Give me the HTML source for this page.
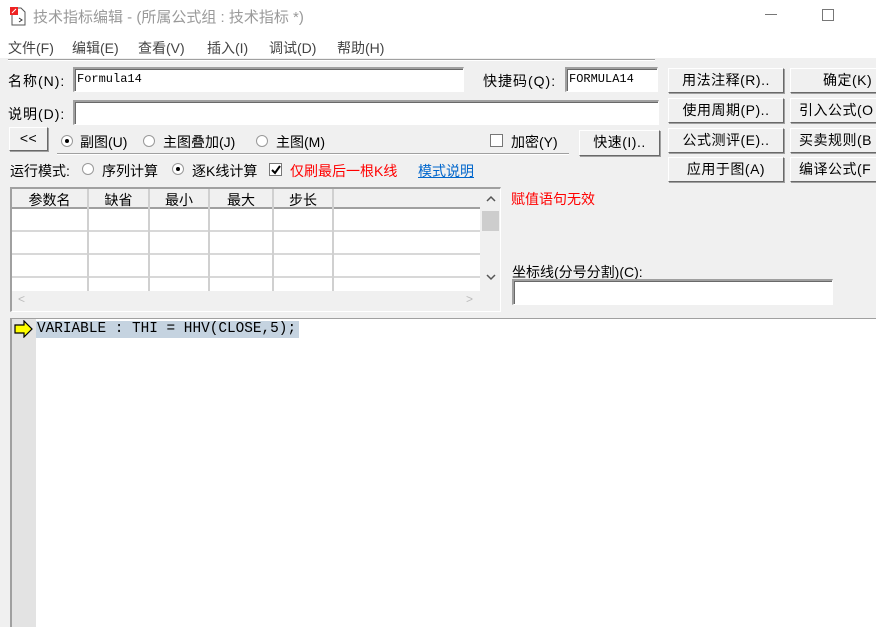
<!DOCTYPE html>
<html><head><meta charset="utf-8"><style>
*{margin:0;padding:0;box-sizing:border-box}
body{width:876px;height:627px;overflow:hidden;background:#f0f0f0;font-family:"Liberation Sans","Noto Sans CJK SC",sans-serif;font-size:14px;color:#000;position:relative}
.a{position:absolute;white-space:nowrap}
.top{left:0;top:0;width:876px;height:58px;background:#fff}
.inp{position:absolute;background:#fff;border-top:2px solid #a0a0a0;border-left:2px solid #a0a0a0;border-right:1px solid #fff;border-bottom:1px solid #fff;box-shadow:inset 1px 1px 0 #696969}
.btn{position:absolute;background:#f0f0f0;border-top:1px solid #fff;border-left:1px solid #fff;border-right:1px solid #696969;border-bottom:1px solid #696969;box-shadow:1px 1px 0 #a0a0a0;text-align:center;font-size:14px;line-height:23px;letter-spacing:0.5px}
.mono{font-family:"Liberation Mono","Noto Sans CJK SC",monospace;font-size:12px}
.rad{position:absolute;width:12px;height:12px;border-radius:50%;background:#fff;border:1px solid #999}
.rad.on::after{content:"";position:absolute;left:3px;top:3px;width:4px;height:4px;border-radius:50%;background:#000}
.chk{position:absolute;width:13px;height:13px;background:#fff;border:1px solid #777}
.m{position:absolute;top:38px;font-size:14px;color:#444}
</style></head><body>
<div class="a top"></div>
<svg class="a" style="left:9px;top:6px" width="18" height="20" viewBox="0 0 18 20"><path d="M3 2h9l4 4v13H3z" fill="#fff" stroke="#555"/><rect x="1" y="1" width="8" height="8" fill="#e22"/><path d="M3 7l4-4" stroke="#fff"/><path d="M10 12l3 2-3 2" fill="none" stroke="#333"/></svg>
<div class="a" style="left:33px;top:6px;font-size:15px;color:#999">技术指标编辑 - (所属公式组 : 技术指标 *)</div>
<div class="a" style="left:765px;top:14px;width:12px;height:1px;background:#777"></div>
<div class="a" style="left:822px;top:9px;width:12px;height:12px;border:1px solid #777"></div>
<div class="m" style="left:8px">文件(F)</div>
<div class="m" style="left:72px">编辑(E)</div>
<div class="m" style="left:138px">查看(V)</div>
<div class="m" style="left:207px">插入(I)</div>
<div class="m" style="left:269px">调试(D)</div>
<div class="m" style="left:337px">帮助(H)</div>
<div class="a" style="left:8px;top:59px;width:647px;height:2px;border-top:1px solid #a0a0a0;border-bottom:1px solid #fff"></div>

<div class="a" style="left:8px;top:71px;letter-spacing:1px">名称(N):</div>
<div class="inp" style="left:73px;top:67px;width:391px;height:25px"><span class="a mono" style="left:2px;top:3px">Formula14</span></div>
<div class="a" style="left:483px;top:71px;letter-spacing:1px">快捷码(Q):</div>
<div class="inp" style="left:565px;top:67px;width:93px;height:25px"><span class="a mono" style="left:2px;top:3px">FORMULA14</span></div>
<div class="a" style="left:8px;top:104px;letter-spacing:1px">说明(D):</div>
<div class="inp" style="left:73px;top:100px;width:586px;height:25px"></div>

<div class="btn" style="left:668px;top:68px;width:116px;height:25px">用法注释(R)..</div>
<div class="btn" style="left:668px;top:98px;width:116px;height:25px">使用周期(P)..</div>
<div class="btn" style="left:668px;top:128px;width:116px;height:25px">公式测评(E)..</div>
<div class="btn" style="left:668px;top:157px;width:116px;height:25px">应用于图(A)</div>
<div class="btn" style="left:790px;top:68px;width:90px;height:25px;text-align:left;padding-left:32px">确定(K)</div>
<div class="btn" style="left:790px;top:98px;width:90px;height:25px;text-align:left;padding-left:8px">引入公式(O</div>
<div class="btn" style="left:790px;top:128px;width:90px;height:25px;text-align:left;padding-left:8px">买卖规则(B</div>
<div class="btn" style="left:790px;top:157px;width:90px;height:25px;text-align:left;padding-left:8px">编译公式(F</div>

<div class="btn" style="left:9px;top:127px;width:39px;height:24px;line-height:21px">&lt;&lt;</div>
<div class="a" style="left:57px;top:153px;width:512px;height:2px;border-top:1px solid #a0a0a0;border-bottom:1px solid #fff"></div>
<div class="rad on" style="left:61px;top:135px"></div><div class="a" style="left:80px;top:132px">副图(U)</div>
<div class="rad" style="left:143px;top:135px"></div><div class="a" style="left:163px;top:132px">主图叠加(J)</div>
<div class="rad" style="left:256px;top:135px"></div><div class="a" style="left:276px;top:132px">主图(M)</div>
<div class="chk" style="left:490px;top:134px"></div><div class="a" style="left:511px;top:132px">加密(Y)</div>
<div class="btn" style="left:579px;top:130px;width:81px;height:26px">快速(I)..</div>

<div class="a" style="left:10px;top:161px">运行模式:</div>
<div class="rad" style="left:82px;top:163px"></div><div class="a" style="left:102px;top:161px">序列计算</div>
<div class="rad on" style="left:172px;top:163px"></div><div class="a" style="left:192px;top:161px">逐K线计算</div>
<div class="chk" style="left:269px;top:163px"></div><svg class="a" style="left:270px;top:164px" width="12" height="12"><path d="M2 6l3 3 5-7" fill="none" stroke="#000" stroke-width="2"/></svg>
<div class="a" style="left:290px;top:161px;color:#f00">仅刷最后一根K线</div>
<div class="a" style="left:418px;top:161px;color:#0066cc;text-decoration:underline">模式说明</div>

<div class="a" style="left:10px;top:187px;width:491px;height:125px;border-top:2px solid #a0a0a0;border-left:2px solid #a0a0a0;border-right:1px solid #fff;border-bottom:1px solid #fff;background:#f0f0f0">
 <div class="a" style="left:0;top:0;width:468px;height:102px;background:#fff"></div>
 <div class="a" style="left:0;top:0;width:468px;height:20px;background:#f0f0f0;border-bottom:2px solid #a0a0a0"></div>
 <div class="a" style="left:0;top:20px;width:468px;height:23px;border-bottom:2px solid #d8d8d8"></div>
 <div class="a" style="left:0;top:43px;width:468px;height:23px;border-bottom:2px solid #d8d8d8"></div>
 <div class="a" style="left:0;top:66px;width:468px;height:23px;border-bottom:2px solid #d8d8d8"></div>
 <div class="a" style="left:75px;top:0;width:2px;height:102px;background:#d0d0d0"></div>
 <div class="a" style="left:136px;top:0;width:2px;height:102px;background:#d0d0d0"></div>
 <div class="a" style="left:196px;top:0;width:2px;height:102px;background:#d0d0d0"></div>
 <div class="a" style="left:260px;top:0;width:2px;height:102px;background:#d0d0d0"></div>
 <div class="a" style="left:320px;top:0;width:2px;height:102px;background:#d0d0d0"></div>
 <div class="a" style="left:0;top:1px;width:75px;text-align:center">参数名</div>
 <div class="a" style="left:77px;top:1px;width:59px;text-align:center">缺省</div>
 <div class="a" style="left:138px;top:1px;width:58px;text-align:center">最小</div>
 <div class="a" style="left:198px;top:1px;width:62px;text-align:center">最大</div>
 <div class="a" style="left:262px;top:1px;width:58px;text-align:center">步长</div>
 <div class="a" style="left:470px;top:22px;width:17px;height:20px;background:#cdcdcd"></div>
 <svg class="a" style="left:473px;top:6px" width="12" height="8"><path d="M2 6l4-4 4 4" fill="none" stroke="#555" stroke-width="1.5"/></svg>
 <svg class="a" style="left:473px;top:84px" width="12" height="8"><path d="M2 2l4 4 4-4" fill="none" stroke="#555" stroke-width="1.5"/></svg>
 <div class="a" style="left:6px;top:103px;font-size:12px;color:#bbb">&lt;</div>
 <div class="a" style="left:454px;top:103px;font-size:12px;color:#bbb">&gt;</div>
</div>

<div class="a" style="left:511px;top:189px;color:#f00">赋值语句无效</div>
<div class="a" style="left:512px;top:262px">坐标线(分号分割)(C):</div>
<div class="inp" style="left:512px;top:279px;width:321px;height:26px"></div>

<div class="a" style="left:10px;top:318px;width:866px;height:309px;background:#fff;border-top:1px solid #a0a0a0;border-left:2px solid #a0a0a0"></div>
<div class="a" style="left:12px;top:319px;width:24px;height:308px;background:#e3e3e3"></div>
<svg class="a" style="left:14px;top:320px" width="20" height="18" viewBox="0 0 20 18"><path d="M1 5h9V1l8 8-8 8v-4H1z" fill="#ffff00" stroke="#000" stroke-width="1.2"/></svg>
<div class="a" style="left:36px;top:321px;width:263px;height:17px;background:#c5d3e0;font-family:'Liberation Mono',monospace;font-size:14.4px;line-height:17px;padding-left:1px;overflow:hidden">VARIABLE : THI = HHV(CLOSE,5);</div>
</body></html>
